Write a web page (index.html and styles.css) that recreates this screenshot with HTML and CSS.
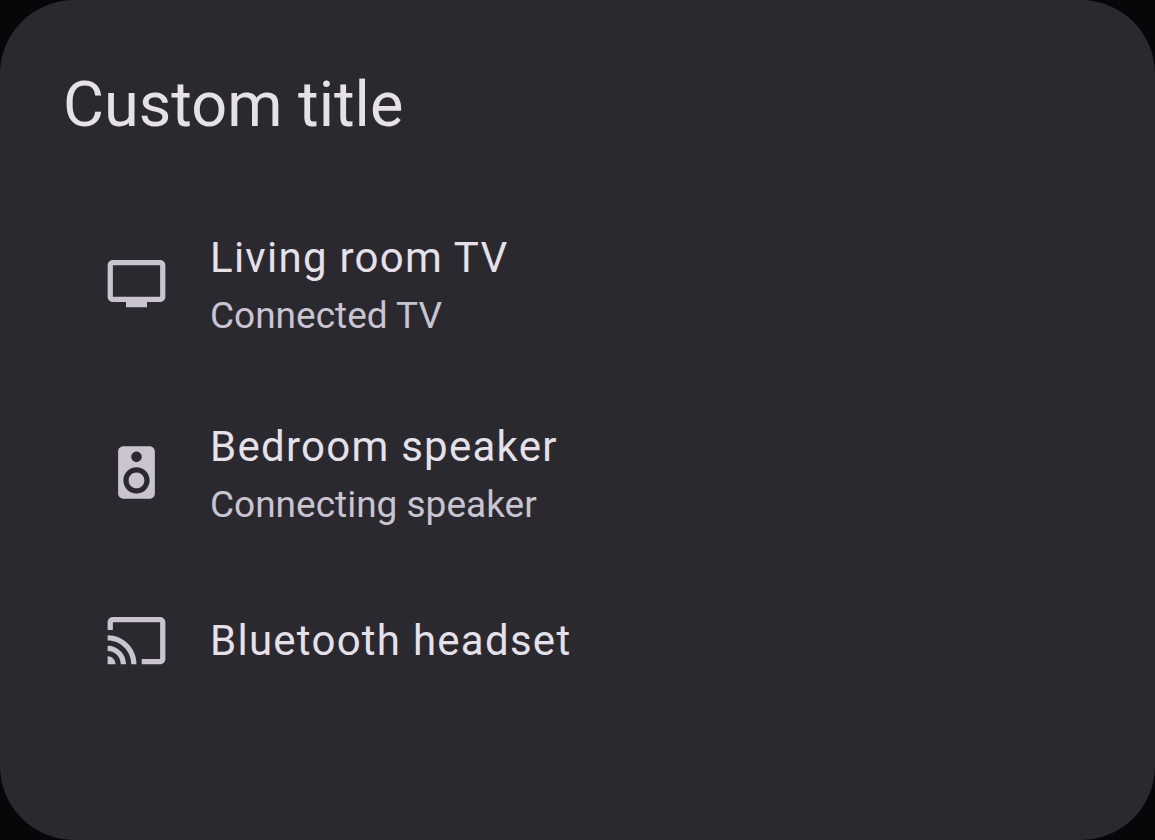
FILE: index.html
```html
<!DOCTYPE html>
<html lang="en">
<head>
<meta charset="utf-8">
<meta name="viewport" content="width=device-width, initial-scale=1">
<title>Custom title</title>
<link rel="stylesheet" href="styles.css">
</head>
<body>
<main class="dialog" role="dialog" aria-labelledby="dialog-title">
  <h1 class="dialog-title" id="dialog-title">Custom title</h1>
  <ul class="routes">
    <li>
      <button class="route" type="button">
        <svg class="route-icon" viewBox="0 0 24 24" aria-hidden="true"><path d="M21 3H3c-1.100 0-2 .9-2 2v12c0 1.100.9 2 2 2h5v2h8v-2h5c1.100 0 1.990-.9 1.990-2L23 5c0-1.100-.9-2-2-2zm0 14H3V5h18v12z"/></svg>
        <span class="route-text">
          <span class="route-name">Living room TV</span>
          <span class="route-status">Connected TV</span>
        </span>
      </button>
    </li>
    <li>
      <button class="route" type="button">
        <svg class="route-icon" viewBox="0 0 24 24" aria-hidden="true"><path d="M17 2H7c-1.100 0-2 .9-2 2v16c0 1.100.9 1.990 2 1.990L17 22c1.100 0 2-.9 2-2V4c0-1.100-.9-2-2-2zm-5 2c1.100 0 2 .9 2 2s-.9 2-2 2c-1.110 0-2-.9-2-2s.89-2 2-2zm0 16c-2.760 0-5-2.240-5-5s2.240-5 5-5 5 2.240 5 5-2.240 5-5 5zm0-8c-1.660 0-3 1.340-3 3s1.340 3 3 3 3-1.340 3-3-1.340-3-3-3z"/></svg>
        <span class="route-text">
          <span class="route-name">Bedroom speaker</span>
          <span class="route-status">Connecting speaker</span>
        </span>
      </button>
    </li>
    <li>
      <button class="route route-single" type="button">
        <svg class="route-icon" viewBox="0 0 24 24" aria-hidden="true"><path d="M21 3H3c-1.100 0-2 .9-2 2v3h2V5h18v14h-7v2h7c1.100 0 2-.9 2-2V5c0-1.100-.9-2-2-2zM1 18v3h3c0-1.660-1.340-3-3-3zm0-4v2c2.760 0 5 2.240 5 5h2c0-3.870-3.130-7-7-7zm0-4v2c4.970 0 9 4.030 9 9h2c0-6.080-4.930-11-11-11z"/></svg>
        <span class="route-text">
          <span class="route-name">Bluetooth headset</span>
        </span>
      </button>
    </li>
  </ul>
</main>
</body>
</html>
```
FILE: styles.css
```css
* {
  box-sizing: border-box;
}

body {
  margin: 0;
  background: #070709;
  font-family: Roboto, "Noto Sans", sans-serif;
}

.dialog {
  min-height: 100vh;
  padding: 63px 0;
  border-radius: 74px;
  background: #2b2930;
}

.dialog-title {
  margin: 0;
  padding: 0 63px;
  font-size: 63px;
  line-height: 84px;
  font-weight: 400;
  color: #e6e0e9;
}

.routes {
  margin: 42px 0 0;
  padding: 0;
  list-style: none;
}

.route {
  display: flex;
  align-items: center;
  gap: 42px;
  width: 100%;
  min-height: 189px;
  padding: 0 105px;
  border: 0;
  background: none;
  font-family: inherit;
  text-align: left;
  color: #e6e0e9;
}

.route-single {
  min-height: 147px;
}

.route-icon {
  flex: none;
  width: 63px;
  height: 63px;
  fill: #cac4d0;
}

.route-text {
  display: flex;
  flex-direction: column;
}

.route-name {
  font-size: 42px;
  line-height: 63px;
  letter-spacing: 0.03em;
}

.route-status {
  font-size: 37px;
  line-height: 53px;
  color: #cac4d0;
}
```
